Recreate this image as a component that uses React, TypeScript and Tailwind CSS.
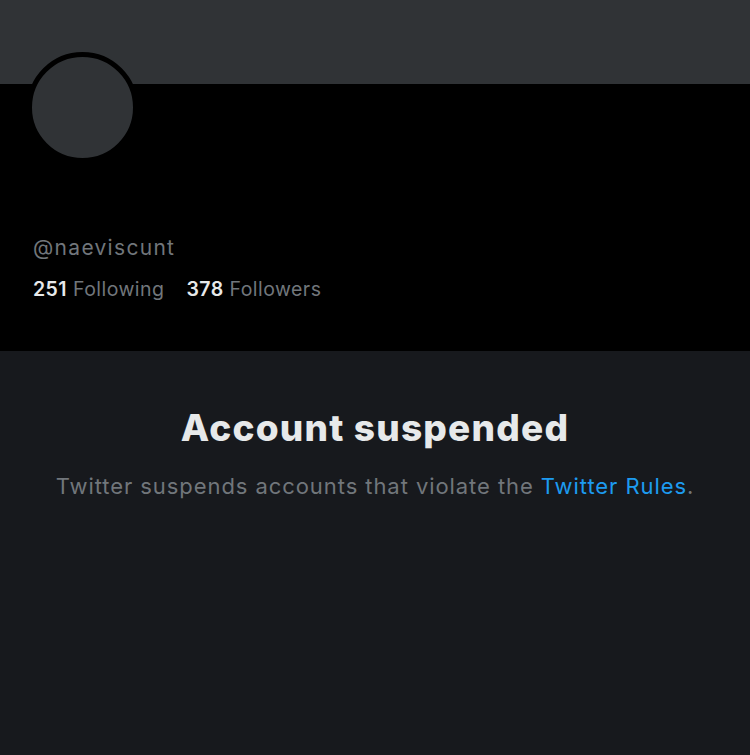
export default function App() {
  return (
    <div className="flex h-[755px] w-[750px] flex-col bg-[#17191d] font-['Inter',sans-serif]">
      {/* Banner */}
      <div className="h-[84px] shrink-0 bg-[#303336]" />

      {/* Profile header */}
      <div className="flex h-[267px] shrink-0 flex-col bg-black px-[33px]">
        <div className="-mt-[32px] ml-[-6px] h-[111px] w-[111px] rounded-full border-[5px] border-black bg-[#303336]" />
        <div className="mt-[74px] text-[21px] leading-none tracking-[1.3px] text-[#71767b]">@naeviscunt</div>
        <div className="mt-[22px] flex gap-[22px] text-[19.5px] leading-none tracking-[0.45px]">
          <span>
            <span className="font-semibold text-[#e7e9ea]">251</span>{" "}
            <span className="text-[#71767b]">Following</span>
          </span>
          <span>
            <span className="font-semibold text-[#e7e9ea]">378</span>{" "}
            <span className="text-[#71767b]">Followers</span>
          </span>
        </div>
      </div>

      {/* Suspended notice */}
      <div className="flex flex-col items-center pt-[58px]">
        <h1 className="text-[37px] font-extrabold leading-none tracking-[1.2px] text-[#e7e9ea]">Account suspended</h1>
        <p className="mt-[29px] text-[22px] leading-none tracking-[0.93px] text-[#71767b]">
          Twitter suspends accounts that violate the{" "}
          <span className="text-[#1d9bf0]">Twitter Rules</span>.
        </p>
      </div>
    </div>
  )
}
